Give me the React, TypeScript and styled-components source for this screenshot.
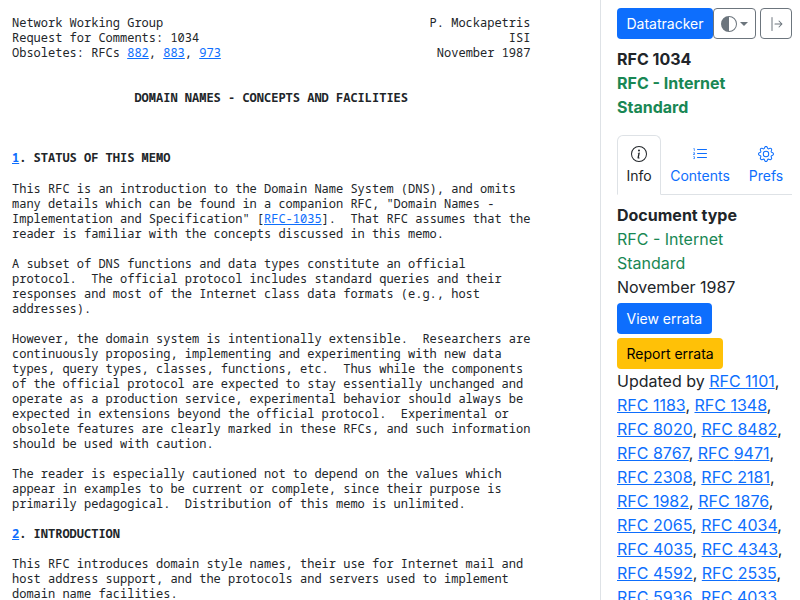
import React from "react";
import styled, { createGlobalStyle } from "styled-components";

const Global = createGlobalStyle`
  html, body { margin: 0; padding: 0; height: 600px; overflow: hidden; background: #fff; }
  #root { height: 600px; }
`;
const Page = styled.div`
  display: flex; width: 800px; height: 600px; overflow: hidden;
  font-family: Inter, "Liberation Sans", sans-serif; color: #212529;
`;
const Main = styled.main`flex: 0 0 600px; width: 600px; overflow: hidden; box-sizing: border-box;`;
const Doc = styled.pre`
  margin: 0; padding: 15.33px 0 0 12px;
  font-family: "Noto Sans Mono", "DejaVu Sans Mono", monospace; font-size: 12px; line-height: 15.02px; color: #212529;
  b { font-weight: 700; }
  a { color: #0d6efd; text-decoration: underline; }
`;
const Side = styled.aside`
  flex: 0 0 200px; width: 200px; box-sizing: border-box; height: 600px; overflow: hidden;
  border-left: 1px solid #dee2e6; padding: 8px 8px 0 16px; font-size: 16px; line-height: 24px;
`;
const Toolbar = styled.div`display: flex; align-items: stretch; height: 31px; margin-bottom: 8px;`;
const Primary = styled.a`
  display: inline-flex; align-items: center; padding: 0 9.5px; background: #0d6efd; color: #fff;
  font-size: 14px; line-height: 21px; border-radius: 4px; white-space: nowrap;
`;
const Outline = styled.button`
  display: inline-flex; align-items: center; justify-content: center; gap: 3px; box-sizing: border-box;
  background: #fff; border: 1px solid #6c757d; border-radius: 4px; color: #6c757d; padding: 0;
  flex: none; width: ${p => p.$w}px; margin-left: ${p => p.$ml}px;
`;
const Caret = styled.span`
  width: 0; height: 0; border-left: 4px solid transparent; border-right: 4px solid transparent; border-top: 4px solid #6c757d;
`;
const Title = styled.div`font-weight: 700; color: ${p => p.$green ? "#198754" : "#212529"};`;
const Tabs = styled.div`display: flex; margin-top: 16px; border-bottom: 1px solid #dee2e6; height: 59px;`;
const Tab = styled.div`
  display: flex; flex-direction: column; align-items: center; box-sizing: border-box; flex: none;
  padding: 8px 0 0; height: 60px; width: ${p => p.$w}px; font-size: 14px; line-height: 21px;
  color: ${p => p.$active ? "#212529" : "#0d6efd"};
  ${p => p.$active ? "background: #fff; border: 1px solid #dee2e6; border-bottom-color: #fff; border-radius: 6px 6px 0 0;" : "border: 1px solid transparent;"}
  svg { margin: 2px 0 3px; }
`;
const Section = styled.div`margin-top: 8px;`;
const Label = styled.div`font-weight: 700;`;
const Green = styled.div`color: #198754;`;
const Btn = styled.a`
  display: block; width: fit-content; padding: 5px 9.5px; font-size: 14px; line-height: 21px; border-radius: 4px;
  margin: 4px 0 0;
  background: ${p => p.$warn ? "#ffc107" : "#0d6efd"}; color: ${p => p.$warn ? "#000" : "#fff"};
`;
const Links = styled.div`
  a { color: #0d6efd; text-decoration: underline; }
`;
const CollapseSvg = styled.svg`transform: translateX(0.5px);`;

const Info = () => (
  <svg width="16" height="16" viewBox="0 0 16 16" fill="currentColor"><path d="M8 15A7 7 0 1 1 8 1a7 7 0 0 1 0 14m0 1A8 8 0 1 0 8 0a8 8 0 0 0 0 16"/><path d="m8.93 6.588-2.29.287-.082.38.45.083c.294.07.352.176.288.469l-.738 3.468c-.194.897.105 1.319.808 1.319.545 0 1.178-.252 1.465-.598l.088-.416c-.2.176-.492.246-.686.246-.275 0-.375-.193-.304-.533zM9 4.5a1 1 0 1 1-2 0 1 1 0 0 1 2 0"/></svg>
);
const ListIcon = () => (
  <svg width="16" height="16" viewBox="0 0 16 16" fill="currentColor"><path fillRule="evenodd" d="M5 11.5a.5.5 0 0 1 .5-.5h9a.5.5 0 0 1 0 1h-9a.5.5 0 0 1-.5-.5m0-4a.5.5 0 0 1 .5-.5h9a.5.5 0 0 1 0 1h-9a.5.5 0 0 1-.5-.5m0-4a.5.5 0 0 1 .5-.5h9a.5.5 0 0 1 0 1h-9a.5.5 0 0 1-.5-.5"/><path d="M1.713 11.865v-.474H2c.217 0 .363-.137.363-.317 0-.185-.158-.31-.361-.31-.223 0-.367.152-.373.31h-.59c.016-.467.373-.787.986-.787.588-.002.954.291.957.703a.595.595 0 0 1-.492.594v.033a.615.615 0 0 1 .569.631c.003.533-.502.8-1.051.8-.656 0-1-.37-1.008-.794h.582c.008.178.186.306.422.309.254 0 .424-.145.422-.35-.002-.195-.155-.348-.414-.348h-.3zm-.004-4.699h-.604v-.035c0-.408.295-.844.958-.844.583 0 .96.326.96.756 0 .389-.257.617-.476.848l-.537.572v.03h1.054V9H1.143v-.395l.957-.99c.138-.142.293-.304.293-.508 0-.18-.147-.32-.342-.32a.33.33 0 0 0-.342.338zM2.564 5h-.635V2.924h-.031l-.598.42v-.567l.629-.443h.635z"/></svg>
);
const Gear = () => (
  <svg width="16" height="16" viewBox="0 0 16 16" fill="currentColor"><path d="M8 4.754a3.246 3.246 0 1 0 0 6.492 3.246 3.246 0 0 0 0-6.492M5.754 8a2.246 2.246 0 1 1 4.492 0 2.246 2.246 0 0 1-4.492 0"/><path d="M9.796 1.343c-.527-1.79-3.065-1.79-3.592 0l-.094.319a.873.873 0 0 1-1.255.52l-.292-.16c-1.64-.892-3.433.902-2.54 2.541l.159.292a.873.873 0 0 1-.52 1.255l-.319.094c-1.79.527-1.79 3.065 0 3.592l.319.094a.873.873 0 0 1 .52 1.255l-.16.292c-.892 1.64.901 3.434 2.541 2.54l.292-.159a.873.873 0 0 1 1.255.52l.094.319c.527 1.79 3.065 1.79 3.592 0l.094-.319a.873.873 0 0 1 1.255-.52l.292.16c1.64.893 3.434-.902 2.54-2.541l-.159-.292a.873.873 0 0 1 .52-1.255l.319-.094c1.79-.527 1.79-3.065 0-3.592l-.319-.094a.873.873 0 0 1-.52-1.255l.16-.292c.893-1.64-.902-3.433-2.541-2.54l-.292.159a.873.873 0 0 1-1.255-.52zm-2.633.283c.246-.835 1.428-.835 1.674 0l.094.319a1.873 1.873 0 0 0 2.693 1.115l.291-.16c.764-.415 1.6.42 1.184 1.185l-.159.292a1.873 1.873 0 0 0 1.116 2.692l.318.094c.835.246.835 1.428 0 1.674l-.319.094a1.873 1.873 0 0 0-1.115 2.693l.16.291c.415.764-.42 1.6-1.185 1.184l-.291-.159a1.873 1.873 0 0 0-2.693 1.116l-.094.318c-.246.835-1.428.835-1.674 0l-.094-.319a1.873 1.873 0 0 0-2.692-1.115l-.292.16c-.764.415-1.6-.42-1.184-1.185l.159-.291A1.873 1.873 0 0 0 1.945 8.93l-.319-.094c-.835-.246-.835-1.428 0-1.674l.319-.094A1.873 1.873 0 0 0 3.06 4.377l-.16-.292c-.415-.764.42-1.6 1.185-1.184l.292.159a1.873 1.873 0 0 0 2.692-1.115z"/></svg>
);
const Contrast = () => (
  <svg width="16" height="16" viewBox="0 0 16 16" fill="currentColor"><path d="M8 15A7 7 0 1 0 8 1zm0 1A8 8 0 1 1 8 0a8 8 0 0 1 0 16"/></svg>
);
const Collapse = () => (
  <CollapseSvg width="16" height="16" viewBox="0 0 16 16" fill="currentColor"><path fillRule="evenodd" d="M6 8a.5.5 0 0 0 .5.5h5.793l-2.147 2.146a.5.5 0 0 0 .708.708l3-3a.5.5 0 0 0 0-.708l-3-3a.5.5 0 0 0-.708.708L12.293 7.5H6.5A.5.5 0 0 0 6 8m-2.5 7a.5.5 0 0 1-.5-.5v-13a.5.5 0 0 1 1 0v13a.5.5 0 0 1-.5.5"/></CollapseSvg>
);

const rfcs = ["1101","1183","1348","8020","8482","8767","9471","2308","2181","1982","1876","2065","4034","4035","4343","4592","2535","5936","4033"];

export default function App() {
  return (
    <Page>
      <Global />
      <Main>
        <Doc>{`Network Working Group                                     P. Mockapetris
Request for Comments: 1034                                           ISI
Obsoletes: RFCs `}<a>882</a>{`, `}<a>883</a>{`, `}<a>973</a>{`                              November 1987


                 `}<b>DOMAIN NAMES - CONCEPTS AND FACILITIES</b>{`



`}<b><a>1</a>. STATUS OF THIS MEMO</b>{`

This RFC is an introduction to the Domain Name System (DNS), and omits
many details which can be found in a companion RFC, "Domain Names -
Implementation and Specification" [`}<a>RFC-1035</a>{`].  That RFC assumes that the
reader is familiar with the concepts discussed in this memo.

A subset of DNS functions and data types constitute an official
protocol.  The official protocol includes standard queries and their
responses and most of the Internet class data formats (e.g., host
addresses).

However, the domain system is intentionally extensible.  Researchers are
continuously proposing, implementing and experimenting with new data
types, query types, classes, functions, etc.  Thus while the components
of the official protocol are expected to stay essentially unchanged and
operate as a production service, experimental behavior should always be
expected in extensions beyond the official protocol.  Experimental or
obsolete features are clearly marked in these RFCs, and such information
should be used with caution.

The reader is especially cautioned not to depend on the values which
appear in examples to be current or complete, since their purpose is
primarily pedagogical.  Distribution of this memo is unlimited.

`}<b><a>2</a>. INTRODUCTION</b>{`

This RFC introduces domain style names, their use for Internet mail and
host address support, and the protocols and servers used to implement
domain name facilities.`}</Doc>
      </Main>
      <Side>
        <Toolbar>
          <Primary>Datatracker</Primary>
          <Outline $w={43} $ml={0}><Contrast /><Caret /></Outline>
          <Outline $w={32} $ml={4}><Collapse /></Outline>
        </Toolbar>
        <Title>RFC 1034</Title>
        <Title $green>RFC - Internet Standard</Title>
        <Tabs>
          <Tab $active $w={44}><Info />Info</Tab>
          <Tab $w={78}><ListIcon />Contents</Tab>
          <Tab $w={54}><Gear />Prefs</Tab>
        </Tabs>
        <Section>
          <Label>Document type</Label>
          <Green>RFC - Internet Standard</Green>
          <div>November 1987</div>
          <Btn>View errata</Btn>
          <Btn $warn>Report errata</Btn>
          <Links>
            Updated by{" "}
            {rfcs.map((n, i) => (
              <React.Fragment key={n}>
                <a>RFC {n}</a>{i < rfcs.length - 1 ? ", " : ""}
              </React.Fragment>
            ))}
          </Links>
        </Section>
      </Side>
    </Page>
  );
}
